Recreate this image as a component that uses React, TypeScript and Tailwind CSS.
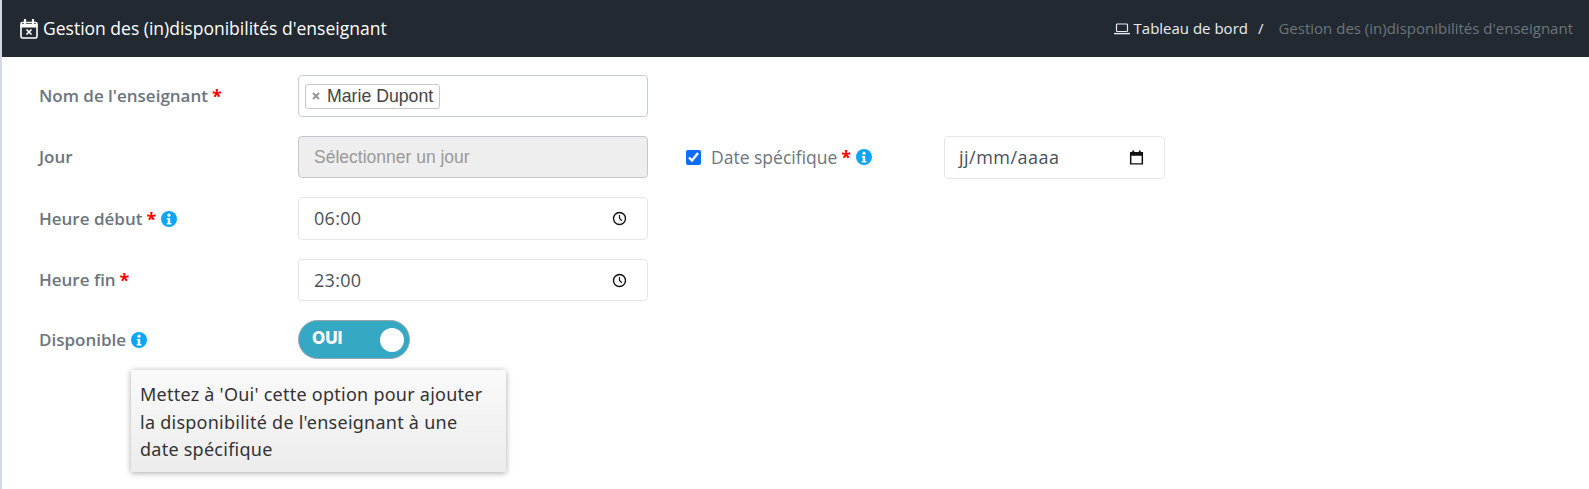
import type { ReactNode } from "react";

const openSans = "font-['Open_Sans',sans-serif]";

function Star() {
  return <span className="text-[#ff0000] font-bold text-[18px] leading-none ml-[4px]">*</span>;
}

function InfoIcon() {
  return (
    <svg viewBox="0 0 16 16" className="w-[16px] h-[16px] ml-[5px] inline-block shrink-0">
      <circle cx="8" cy="8" r="8" fill="#0ea5f9" />
      <circle cx="8" cy="4.2" r="1.6" fill="#fff" />
      <path d="M5.8 7h3.4v5h1.2v1.6H5.7V12h1.1V8.6h-1z" fill="#fff" />
    </svg>
  );
}

function ClockIcon() {
  return (
    <svg viewBox="0 0 16 16" className="w-[15px] h-[15px]" fill="none" stroke="#111" strokeWidth="1.5">
      <circle cx="8" cy="8" r="6.4" />
      <path d="M8 4.2V8l2.6 2.4" strokeWidth="1.2" />
    </svg>
  );
}

function CalendarIcon() {
  return (
    <svg viewBox="0 0 16 16" className="w-[15px] h-[15px]" fill="#111">
      <path d="M3.5 0.5h2v1.5h5V0.5h2V2H15v13.5H1V2h2.5zM2.6 6v8h10.8V6z" />
    </svg>
  );
}

function CalendarXIcon() {
  return (
    <svg viewBox="0 0 18 20" className="w-[18px] h-[20px] mr-[5px]" fill="none" stroke="#fff">
      <rect x="1" y="3.5" width="16" height="15.5" rx="1.5" strokeWidth="1.6" />
      <path d="M1 5.5h16V8H1z" fill="#fff" strokeWidth="1" />
      <path d="M5 0.5v4M13 0.5v4" strokeWidth="2.2" strokeLinecap="round" />
      <path d="M6.5 10.5l5 5M11.5 10.5l-5 5" strokeWidth="1.7" />
    </svg>
  );
}

function LaptopIcon() {
  return (
    <svg viewBox="0 0 16 12" className="w-[16px] h-[12px] mr-[4px]" fill="none" stroke="#e9ecef" strokeWidth="1.2">
      <rect x="2.5" y="1" width="11" height="7.5" rx="0.8" />
      <path d="M0 10.6h16" strokeWidth="1.4" />
    </svg>
  );
}

function Row({ label, children, className }: { label: ReactNode; children: ReactNode; className: string }) {
  return (
    <div className={`flex items-center ${className}`}>
      <div className={`w-[296px] pl-[37px] flex items-center text-[17px] font-semibold text-[#6c757d] ${openSans}`}>
        {label}
      </div>
      {children}
    </div>
  );
}

function TimeField({ value, height }: { value: string; height: string }) {
  return (
    <div className={`w-[350px] ${height} flex items-center justify-between pl-[15px] pr-[20px] bg-white border border-[#e3e7ed] rounded text-[18px] tracking-[0.3px] text-[#495057] ${openSans}`}>
      <span>{value}</span>
      <ClockIcon />
    </div>
  );
}

export default function App() {
  return (
    <div className="w-[1589px] h-[489px] bg-white border-l-[2px] border-[#d2d9e5] overflow-hidden">
      <header className={`h-[57px] bg-[#232931] flex items-center justify-between pl-[18px] pr-[16px] ${openSans}`}>
        <div className="flex items-center text-white text-[17.5px]">
          <CalendarXIcon />
          <span>Gestion des (in)disponibilités d'enseignant</span>
        </div>
        <div className="flex items-center text-[15px]">
          <LaptopIcon />
          <span className="text-[#e9ecef]">Tableau de bord</span>
          <span className="text-[#e9ecef] ml-[10px] mr-[15px]">/</span>
          <span className="text-[#6c757d]">Gestion des (in)disponibilités d'enseignant</span>
        </div>
      </header>

      <main className="relative">
        <Row className="pt-[18px] h-[60px]" label={<>Nom de l'enseignant<Star /></>}>
          <div className="w-[350px] h-[42px] flex items-center px-[6px] bg-white border border-[#c9ced4] rounded-[4px] font-['Liberation_Sans',sans-serif]">
            <span className="h-[25px] flex items-center px-[6px] border border-[#c6c9cc] rounded-[3px] text-[17.7px] text-[#444]">
              <svg viewBox="0 0 8 8" className="w-[8px] h-[8px] mr-[7px]" stroke="#999" strokeWidth="2">
                <path d="M1 1l6 6M7 1l-6 6" />
              </svg>
              Marie Dupont
            </span>
          </div>
        </Row>

        <Row className="mt-[19px] h-[42px]" label="Jour">
          <div className="w-[350px] h-[42px] flex items-center pl-[15px] bg-[#eeeeee] border border-[#c4c8cc] rounded-[4px] text-[17.5px] text-[#999] font-['Liberation_Sans',sans-serif]">
            Sélectionner un jour
          </div>
          <div className={`ml-[38px] flex items-center w-[258px] text-[17.5px] text-[#6c757d] ${openSans}`}>
            <input type="checkbox" defaultChecked className="w-[15px] h-[15px] accent-[#0d6efd] m-0" />
            <span className="ml-[10px]">Date spécifique</span>
            <Star />
            <InfoIcon />
          </div>
          <div className={`w-[221px] h-[43px] flex items-center justify-between pl-[14px] pr-[20px] bg-white border border-[#e3e7ed] rounded text-[18px] tracking-[0.5px] text-[#495057] ${openSans}`}>
            <span>jj/mm/aaaa</span>
            <CalendarIcon />
          </div>
        </Row>

        <Row className="mt-[19px] h-[43px]" label={<>Heure début<Star /><InfoIcon /></>}>
          <TimeField value="06:00" height="h-[43px]" />
        </Row>

        <Row className="mt-[19px] h-[42px]" label={<>Heure fin<Star /></>}>
          <TimeField value="23:00" height="h-[42px]" />
        </Row>

        <Row className="mt-[19px] h-[39px]" label={<>Disponible<InfoIcon /></>}>
          <div className="w-[112px] h-[39px] flex items-center justify-between pl-[13px] pr-[5px] bg-[#35a8c4] border border-[#9aa5aa] rounded-full">
            <span className="text-white font-extrabold text-[17px] -mt-[2px] font-['Inter',sans-serif]">OUI</span>
            <span className="w-[24px] h-[24px] rounded-full bg-white" />
          </div>
        </Row>

        <div className="absolute left-[129px] top-[313px] w-[375px] h-[102px] pl-[9px] pr-[14px] py-[11px] bg-gradient-to-b from-[#fafafa] to-[#ececec] shadow-[0_1px_6px_rgba(0,0,0,0.35)] text-[18px] tracking-[0.25px] leading-[27.5px] text-[#333] font-['Noto_Sans',sans-serif]">
          Mettez à 'Oui' cette option pour ajouter la disponibilité de l'enseignant à une date spécifique
        </div>
      </main>
    </div>
  );
}
